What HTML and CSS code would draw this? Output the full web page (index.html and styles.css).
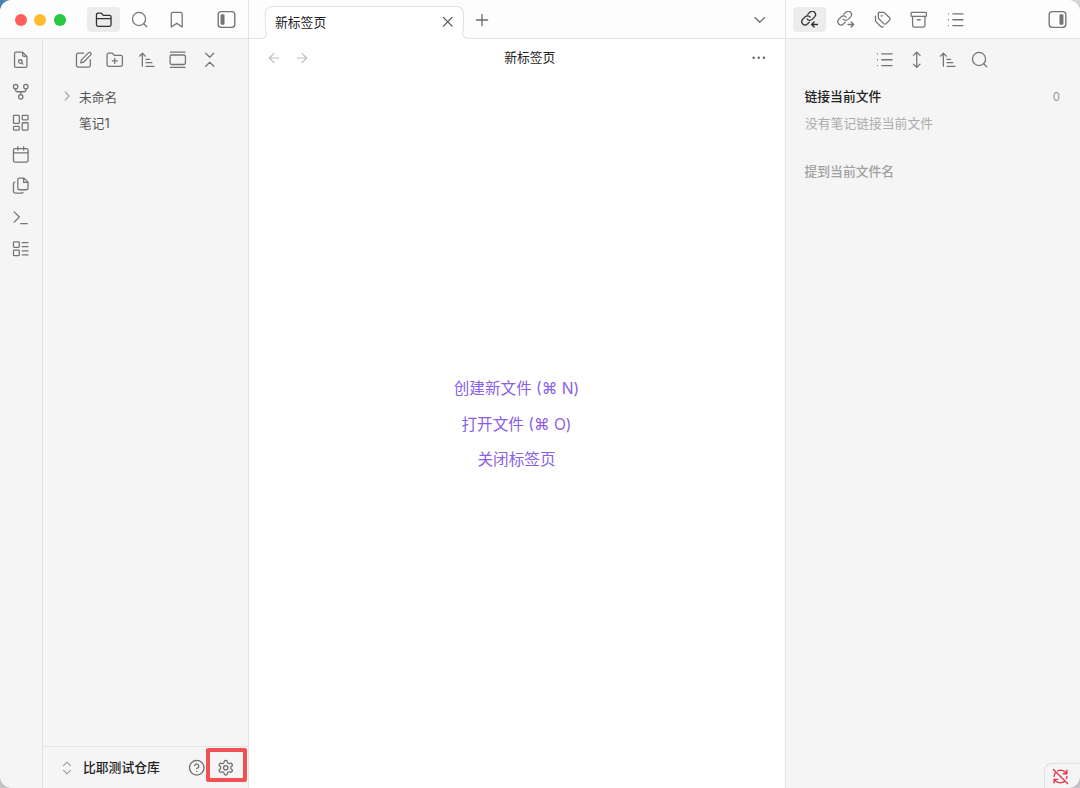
FILE: index.html
```html
<!DOCTYPE html>
<html lang="zh-CN">
<head>
<meta charset="utf-8">
<title>新标签页</title>
<link rel="stylesheet" href="styles.css">
</head>
<body>
<svg class="sprite" aria-hidden="true">
  <symbol id="folder" viewBox="0 0 24 24"><path d="M20 21a2 2 0 0 0 2-2V8a2 2 0 0 0-2-2h-7.900a2 2 0 0 1-1.690-.9L9.600 3.900A2 2 0 0 0 7.930 3H4a2 2 0 0 0-2 2v14a2 2 0 0 0 2 2ZM2 10.500h20"/></symbol>
  <symbol id="search" viewBox="0 0 24 24"><circle cx="11" cy="11" r="9"/><path d="m21.500 21.500-4-4"/></symbol>
  <symbol id="bookmark" viewBox="0 0 24 24"><path d="m19.500 22-7.500-5-7.500 5V4a2 2 0 0 1 2-2h11a2 2 0 0 1 2 2z"/></symbol>
  <symbol id="sidebar" viewBox="0 0 24 24"><rect x="1.500" y="2" width="21" height="20" rx="4"/><rect x="4.500" y="5.500" width="5" height="13" rx="1.500" fill="currentColor" stroke="none"/></symbol>
  <symbol id="file-search" viewBox="0 0 24 24"><path d="M14.500 1.500H5.500a2 2 0 0 0-2 2v17a2 2 0 0 0 2 2h13a2 2 0 0 0 2-2V7.500ZM14.500 1.500v4a2 2 0 0 0 2 2h4M13.300 16.300 15 18"/><circle cx="11.500" cy="14.500" r="2.500"/></symbol>
  <symbol id="fork" viewBox="0 0 24 24"><circle cx="12" cy="19" r="3"/><circle cx="5" cy="5" r="3"/><circle cx="19" cy="5" r="3"/><path d="M19 8v2a2 2 0 0 1-2 2H7a2 2 0 0 1-2-2V8M12 12v4"/></symbol>
  <symbol id="dashboard" viewBox="0 0 24 24"><rect x="2" y="2" width="8" height="11" rx="1"/><rect x="14" y="2" width="8" height="6" rx="1"/><rect x="14" y="12" width="8" height="10" rx="1"/><rect x="2" y="17" width="8" height="5" rx="1"/></symbol>
  <symbol id="calendar" viewBox="0 0 24 24"><rect x="2" y="3.500" width="20" height="18.500" rx="2"/><path d="M8 1v4.500M16 1v4.500M2 9.500h20"/></symbol>
  <symbol id="files" viewBox="0 0 24 24"><path d="M16.500 1.500H10a2 2 0 0 0-2 2v12a2 2 0 0 0 2 2h10a2 2 0 0 0 2-2V7zM16 1.500V7.500h6M4 7a2 2 0 0 0-2 2v11a2 2 0 0 0 2 2h9a2 2 0 0 0 2-1"/></symbol>
  <symbol id="terminal" viewBox="0 0 24 24"><path d="m3 18 7-7-7-7M12 20h9"/></symbol>
  <symbol id="layout-list" viewBox="0 0 24 24"><rect x="2" y="2.500" width="8" height="7.500" rx="1"/><rect x="2" y="14" width="8" height="7.500" rx="1"/><path d="M14 3.500h8M14 9h8M14 15h8M14 20.500h8"/></symbol>
  <symbol id="edit" viewBox="0 0 24 24"><path d="M12 3H4a2 2 0 0 0-2 2v15a2 2 0 0 0 2 2h15a2 2 0 0 0 2-2v-8M18.375 2.625a1.800 1.800 0 0 1 3 3l-9.500 9.500-4 1 1-4z"/></symbol>
  <symbol id="folder-plus" viewBox="0 0 24 24"><path d="M20.500 21a2 2 0 0 0 2-2V8a2 2 0 0 0-2-2h-8.400a2 2 0 0 1-1.690-.9L9.600 3.900A2 2 0 0 0 7.930 3H3.500a2 2 0 0 0-2 2v14a2 2 0 0 0 2 2ZM12 10v7M8.500 13.500h7"/></symbol>
  <symbol id="sort" viewBox="0 0 24 24"><path d="m2 7 4-4 4 4M6 3v18M11 11.500h5M11 16h8M11 21h11"/></symbol>
  <symbol id="gallery" viewBox="0 0 24 24"><path d="M2 1.500h20M2 22.500h20"/><rect x="1.500" y="5.500" width="21" height="13" rx="2"/></symbol>
  <symbol id="collapse" viewBox="0 0 24 24"><path d="m6.500 21 5.500-5.500 5.500 5.500M6.500 3 12 8.500 17.500 3"/></symbol>
  <symbol id="tags" viewBox="0 0 24 24"><path d="M13.172 2a2 2 0 0 1 1.414.586l6.710 6.710a2.400 2.400 0 0 1 0 3.408l-4.592 4.592a2.400 2.400 0 0 1-3.408 0l-6.710-6.710A2 2 0 0 1 6 9.172V3a1 1 0 0 1 1-1zM2 7v6.172a2 2 0 0 0 .586 1.414l6.710 6.710a2.400 2.400 0 0 0 3.191.193"/><circle cx="10.500" cy="6.500" r=".5"/></symbol>
  <symbol id="archive" viewBox="0 0 24 24"><rect x="1.500" y="2" width="21" height="5.500" rx="1"/><path d="M3.500 7.500V20a2 2 0 0 0 2 2h13a2 2 0 0 0 2-2V7.500M10 12h4"/></symbol>
  <symbol id="list" viewBox="0 0 24 24"><path d="M8 4h14M8 12h14M8 20h14M2 4h.01M2 12h.01M2 20h.01"/></symbol>
  <symbol id="updown" viewBox="0 0 24 24"><path d="M12 1.500v21M7.500 18l4.500 4.500 4.500-4.500M7.500 6 12 1.500 16.500 6"/></symbol>
  <symbol id="link-in" viewBox="0 0 24 24"><path d="M8.500 11a4.600 4.600 0 0 0 6.800.5l3.400-3.400a4.600 4.600 0 0 0-6.500-6.500l-3 3M12.500 8.500a4.600 4.600 0 0 0-6.800-.5l-3.400 3.400a4.600 4.600 0 0 0 6.500 6.500l2.700-2.700M23 18.500h-8M18 15l-3.500 3.500L18 22"/></symbol>
  <symbol id="link-out" viewBox="0 0 24 24"><path d="M8.500 11a4.600 4.600 0 0 0 6.800.5l3.400-3.400a4.600 4.600 0 0 0-6.500-6.500l-3 3M12.500 8.500a4.600 4.600 0 0 0-6.800-.5l-3.400 3.400a4.600 4.600 0 0 0 6.500 6.500l2.700-2.700M15 18.500h8M19.500 15l3.500 3.500-3.500 3.500"/></symbol>
  <symbol id="close" viewBox="0 0 24 24"><path d="M18 6 6 18M6 6l12 12"/></symbol>
  <symbol id="plus" viewBox="0 0 24 24"><path d="M4.500 12h15M12 4.500v15"/></symbol>
  <symbol id="chevron-down" viewBox="0 0 24 24"><path d="m5.500 9 6.500 6.500L18.500 9"/></symbol>
  <symbol id="chevron-right" viewBox="0 0 24 24"><path d="m9 19 6.500-7L9 5"/></symbol>
  <symbol id="arrow-left" viewBox="0 0 24 24"><path d="m12 19-7-7 7-7M19 12H5"/></symbol>
  <symbol id="arrow-right" viewBox="0 0 24 24"><path d="m12 5 7 7-7 7M5 12h14"/></symbol>
  <symbol id="more" viewBox="0 0 24 24"><circle cx="12" cy="12" r=".8"/><circle cx="19" cy="12" r=".8"/><circle cx="5" cy="12" r=".8"/></symbol>
  <symbol id="selector" viewBox="0 0 24 24"><path d="m6 16 6 6 6-6M6 8l6-6 6 6"/></symbol>
  <symbol id="help" viewBox="0 0 24 24"><circle cx="12" cy="12" r="10"/><path d="M9.090 9a3 3 0 0 1 5.830 1c0 2-3 3-3 3M12 17h.01"/></symbol>
  <symbol id="gear" viewBox="0 0 24 24"><path d="M12.220 2h-.44a2 2 0 0 0-2 2v.18a2 2 0 0 1-1 1.730l-.43.25a2 2 0 0 1-2 0l-.15-.08a2 2 0 0 0-2.730.73l-.22.38a2 2 0 0 0 .73 2.730l.15.1a2 2 0 0 1 1 1.720v.51a2 2 0 0 1-1 1.740l-.15.090a2 2 0 0 0-.73 2.730l.22.38a2 2 0 0 0 2.730.73l.15-.08a2 2 0 0 1 2 0l.43.25a2 2 0 0 1 1 1.730V20a2 2 0 0 0 2 2h.44a2 2 0 0 0 2-2v-.18a2 2 0 0 1 1-1.730l.43-.25a2 2 0 0 1 2 0l.15.08a2 2 0 0 0 2.730-.73l.22-.39a2 2 0 0 0-.73-2.730l-.15-.08a2 2 0 0 1-1-1.740v-.5a2 2 0 0 1 1-1.740l.15-.090a2 2 0 0 0 .73-2.730l-.22-.38a2 2 0 0 0-2.730-.73l-.15.08a2 2 0 0 1-2 0l-.43-.25a2 2 0 0 1-1-1.730V4a2 2 0 0 0-2-2z"/><circle cx="12" cy="12" r="3"/></symbol>
  <symbol id="sync-off" viewBox="0 0 24 24"><path d="M21 8 18.740 5.740A9.750 9.750 0 0 0 12 3c-1.500 0-2.900.3-4.100.9M3 12a9 9 0 0 1 1.900-5.500M3 16l2.260 2.260A9.750 9.750 0 0 0 12 21c2.500 0 4.700-1 6.400-2.600M21 12c0 1-.2 1.900-.5 2.800M21 3v5h-5M8 16H3v5M2 2l20 20"/></symbol>
</svg>

<div class="window">
  <section class="left">
    <header class="bar left-bar">
      <div class="lights"><i class="red"></i><i class="yellow"></i><i class="green"></i></div>
      <div class="tabs">
        <button class="tab-icon active"><svg><use href="#folder"/></svg></button>
        <button class="tab-icon"><svg><use href="#search"/></svg></button>
        <button class="tab-icon"><svg><use href="#bookmark"/></svg></button>
      </div>
      <svg class="toggle"><use href="#sidebar"/></svg>
    </header>
    <div class="left-body">
      <nav class="ribbon">
        <svg><use href="#file-search"/></svg>
        <svg><use href="#fork"/></svg>
        <svg><use href="#dashboard"/></svg>
        <svg><use href="#calendar"/></svg>
        <svg><use href="#files"/></svg>
        <svg><use href="#terminal"/></svg>
        <svg><use href="#layout-list"/></svg>
      </nav>
      <div class="explorer">
        <div class="tools">
          <svg><use href="#edit"/></svg>
          <svg><use href="#folder-plus"/></svg>
          <svg><use href="#sort"/></svg>
          <svg><use href="#gallery"/></svg>
          <svg><use href="#collapse"/></svg>
        </div>
        <ul class="tree">
          <li><svg><use href="#chevron-right"/></svg><span>未命名</span></li>
          <li><span>笔记1</span></li>
        </ul>
        <footer class="vault">
          <svg class="selector"><use href="#selector"/></svg>
          <span class="vault-name">比耶测试仓库</span>
          <svg class="help"><use href="#help"/></svg>
          <span class="highlight"><svg><use href="#gear"/></svg></span>
        </footer>
      </div>
    </div>
  </section>

  <main class="center">
    <header class="bar center-bar">
      <div class="doc-tab"><span>新标签页</span><svg><use href="#close"/></svg></div>
      <svg class="new-tab"><use href="#plus"/></svg>
      <svg class="tab-menu"><use href="#chevron-down"/></svg>
    </header>
    <div class="view-header">
      <div class="history"><svg><use href="#arrow-left"/></svg><svg><use href="#arrow-right"/></svg></div>
      <span class="view-title">新标签页</span>
      <svg class="more"><use href="#more"/></svg>
    </div>
    <div class="empty">
      <a>创建新文件 (⌘ N)</a>
      <a>打开文件 (⌘ O)</a>
      <a>关闭标签页</a>
    </div>
  </main>

  <aside class="right">
    <header class="bar right-bar">
      <div class="tabs">
        <button class="tab-icon active"><svg><use href="#link-in"/></svg></button>
        <button class="tab-icon"><svg><use href="#link-out"/></svg></button>
        <button class="tab-icon"><svg><use href="#tags"/></svg></button>
        <button class="tab-icon"><svg><use href="#archive"/></svg></button>
        <button class="tab-icon"><svg><use href="#list"/></svg></button>
      </div>
      <svg class="toggle flip"><use href="#sidebar"/></svg>
    </header>
    <div class="tools right-tools">
      <svg><use href="#list"/></svg>
      <svg><use href="#updown"/></svg>
      <svg><use href="#sort"/></svg>
      <svg><use href="#search"/></svg>
    </div>
    <div class="backlinks">
      <div class="linked"><span>链接当前文件</span><span class="count">0</span></div>
      <p class="none">没有笔记链接当前文件</p>
      <p class="mentions">提到当前文件名</p>
    </div>
    <div class="status"><svg><use href="#sync-off"/></svg></div>
  </aside>
</div>
</body>
</html>
```
FILE: styles.css
```css
* { box-sizing: border-box; margin: 0; padding: 0; }

body {
  width: 1080px;
  height: 788px;
  overflow: hidden;
  background: linear-gradient(to right, #3f7fae 0, #c9c9c9 30px, #d4d4d4 100%) top / 100% 30px no-repeat, #c6c4c6;
  font-family: "Inter", "Noto Sans CJK SC", sans-serif;
  font-size: 12.800px;
  color: #222;
}

.sprite { display: none; }

svg {
  display: block;
  flex: none;
  width: 17.500px;
  height: 17.500px;
  fill: none;
  stroke: currentColor;
  stroke-width: 1.750;
  stroke-linecap: round;
  stroke-linejoin: round;
}

.window {
  display: grid;
  grid-template-columns: 249px 536px 295px;
  height: 788px;
  border-radius: 12px;
  overflow: hidden;
  background: #f5f5f5;
}

.bar {
  display: flex;
  align-items: center;
  height: 39px;
  border-bottom: 1px solid #e4e4e4;
  background: #fdfdfd;
  color: #6b6b6b;
}

.left { display: flex; flex-direction: column; border-right: 1px solid #e3e3e3; }
.left-bar { padding: 1px 12.500px 0 14.500px; }
.lights { display: flex; gap: 7.700px; margin-right: 21.100px; }
.lights i { width: 12px; height: 12px; border-radius: 50%; }
.red { background: #ff5f57; }
.yellow { background: #febc2e; }
.green { background: #28c840; }

.tabs { display: flex; gap: 3.500px; }
.tab-icon {
  display: grid;
  place-items: center;
  width: 33px;
  height: 25px;
  border: 0;
  border-radius: 4px;
  background: none;
  color: #757575;
}
.tab-icon.active { background: #ececec; color: #303030; }
.toggle { margin-left: auto; width: 19px; height: 19px; color: #757575; }
.flip { transform: scaleX(-1); }

.left-body { display: flex; flex: 1; }
.ribbon {
  display: flex;
  flex-direction: column;
  align-items: center;
  gap: 14px;
  width: 43px;
  padding-top: 12.250px;
  border-right: 1px solid #e3e3e3;
  color: #757575;
}
.explorer { display: flex; flex: 1; flex-direction: column; }
.tools {
  display: flex;
  gap: 14px;
  padding: 12.250px 0 0 31.500px;
  color: #757575;
}

.tree { list-style: none; padding: 14px 0 0 17px; color: #555; }
.tree li { display: flex; align-items: center; height: 26.500px; padding-left: 19px; }
.tree svg { width: 14px; height: 14px; margin: 0 5px 0 -19px; color: #a5a5a5; stroke-width: 2; }

.vault {
  display: flex;
  align-items: center;
  height: 42px;
  margin-top: auto;
  padding-left: 17px;
  border-top: 1px solid #e3e3e3;
}
.selector { width: 14px; height: 14px; margin-right: 9px; color: #999; }
.vault-name { width: 104.500px; padding-bottom: 2px; font-weight: 500; }
.help { color: #6c6c6c; }
.highlight {
  display: grid;
  flex: none;
  place-items: center;
  width: 41px;
  height: 34px;
  margin: -5px 0 0 .5px;
  border: 4px solid #f05152;
  border-radius: 2px;
  color: #6c6c6c;
}
.highlight svg { margin-top: 5px; }

.center { display: flex; flex-direction: column; background: #fff; }
.center-bar { align-items: flex-end; padding-left: 16px; }
.doc-tab {
  position: relative;
  display: flex;
  align-items: center;
  justify-content: space-between;
  width: 199px;
  height: 33px;
  margin-bottom: -1px;
  padding: 0 7px 2px 9px;
  border: 1px solid #e0e0e0;
  border-bottom: 0;
  border-radius: 7px 7px 0 0;
  background: #fff;
  color: #222;
}
/* curved feet where the tab joins the bar */
.doc-tab::before, .doc-tab::after {
  content: "";
  position: absolute;
  bottom: 0;
  width: 7px;
  height: 7px;
  border: solid #e0e0e0;
  background: #fdfdfd;
  clip-path: inset(0);
}
.doc-tab::before {
  left: -7px;
  border-width: 0 1px 1px 0;
  border-bottom-right-radius: 6px;
  box-shadow: 3px 3px 0 #fff;
}
.doc-tab::after {
  right: -7px;
  border-width: 0 0 1px 1px;
  border-bottom-left-radius: 6px;
  box-shadow: -3px 3px 0 #fff;
}
.doc-tab span { padding-bottom: 1px; }
.doc-tab svg { color: #555; }
.new-tab { margin: 0 0 9.500px 8.500px; width: 18px; height: 18px; }
.tab-menu { margin: 0 16.500px 10px auto; }

.view-header {
  display: grid;
  grid-template-columns: 1fr auto 1fr;
  align-items: center;
  height: 38px;
  padding: 0 17.500px 0 17px;
}
.history { display: flex; gap: 12px; color: #bdbdbd; }
.history svg { width: 16px; height: 16px; }
.view-title { padding: 0 0 3px 26px; }
.more { justify-self: end; color: #666; }

.empty {
  display: flex;
  flex: 1;
  flex-direction: column;
  align-items: center;
  padding: 294px 1px 0 0;
  color: #8a5fe8;
  font-size: 15.600px;
}
.empty a { line-height: 35.500px; }

.right { display: flex; flex-direction: column; border-left: 1px solid #e3e3e3; }
.right-bar { padding: 1px 13.500px 0 7px; }
.right-tools { padding-left: 90px; }
.backlinks { padding: 17.750px 20px 0 18.500px; }
.linked { display: flex; justify-content: space-between; line-height: 20px; font-weight: 500; }
.count { color: #999; font-weight: 400; font-size: 11.500px; }
.none { padding-left: .5px; margin-top: 7px; line-height: 20px; color: #ababab; }
.mentions { margin-top: 28px; line-height: 20px; color: #a0a0a0; font-weight: 500; }
.status {
  display: flex;
  align-self: flex-end;
  width: 36px;
  height: 25px;
  margin-top: auto;
  padding: 4px 0 0 7px;
  border: 1px solid #e0e0e0;
  border-width: 1px 0 0 1px;
  border-radius: 8px 0 0 0;
  color: #e5364b;
}
.status svg { width: 17px; height: 17px; stroke-width: 2; }
```
